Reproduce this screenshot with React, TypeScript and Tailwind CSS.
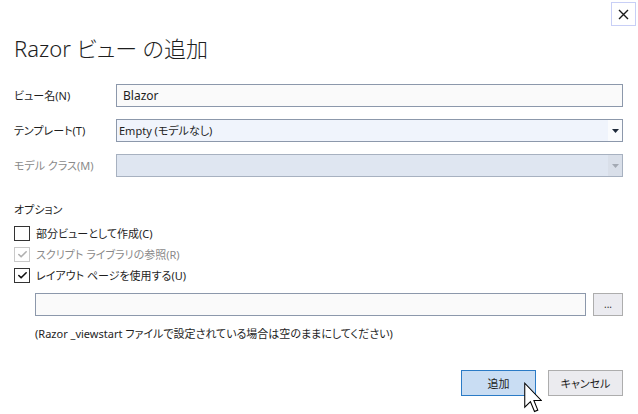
import { Check } from 'lucide-react'

const font = "font-['Noto_Sans','Noto_Sans_CJK_JP',sans-serif] [font-feature-settings:'palt']"

function Arrow({ muted }: { muted?: boolean }) {
  return (
    <div className={`w-[14px] self-stretch flex items-center justify-center ${muted ? 'bg-[#d9dfe9]' : 'bg-[#fafbfd]'}`}>
      <svg width="7" height="4" viewBox="0 0 7 4">
        <path d="M0 0h7L3.5 4z" fill={muted ? '#a3a9b3' : '#1e2a3a'} />
      </svg>
    </div>
  )
}

function CheckRow({ label, checked, disabled }: { label: string; checked?: boolean; disabled?: boolean }) {
  return (
    <div className="flex items-center h-[21px] gap-[6px]">
      <div
        className={`w-[16px] h-[15px] border flex items-center justify-center ${
          disabled ? 'border-[#c9c9c9] bg-white' : 'border-[#333] bg-white'
        }`}
      >
        {checked && <Check size={11} strokeWidth={3.5} className={disabled ? 'text-[#b0b0b0]' : 'text-[#111]'} />}
      </div>
      <span className={disabled ? 'text-[#8a8a8a]' : 'text-[#1e1e1e]'}>{label}</span>
    </div>
  )
}

export default function App() {
  return (
    <div className={`relative w-[638px] h-[414px] bg-white text-[11px] leading-none text-[#1e1e1e] pl-[14px] pr-[15px] ${font}`}>
      <div className="flex justify-end pt-[2px] -mr-[13px]">
        <button className="w-[25px] h-[24px] border border-[#c8cff6] flex items-center justify-center">
          <svg width="11" height="11" viewBox="0 0 11 11">
            <path d="M1 1l9 9M10 1l-9 9" stroke="#1a1a1a" strokeWidth="1.4" />
          </svg>
        </button>
      </div>

      <h1 className="mt-[6px] text-[22px] font-light leading-[32px] text-[#1e1e1e]">Razor ビュー の追加</h1>

      <div className="mt-[20px] grid grid-cols-[102px_1fr] gap-y-[12px] items-center">
        <span>ビュー名(N)</span>
        <div className="h-[23px] border border-[#8c98ab] bg-[#fafafa] flex items-center px-[6px] text-[12px]">Blazor</div>

        <span>テンプレート(T)</span>
        <div className="h-[23px] border border-[#8c98ab] bg-[#f0f4fc] flex items-center">
          <span className="flex-1 px-[2px]">Empty (モデルなし)</span>
          <Arrow />
        </div>

        <span className="text-[#8a8a8a]">モデル クラス(M)</span>
        <div className="h-[23px] border border-[#a7b1c0] bg-[#dfe6f1] flex">
          <span className="flex-1" />
          <Arrow muted />
        </div>
      </div>

      <div className="mt-[27px]">オプション</div>

      <div className="mt-[8px] flex flex-col">
        <CheckRow label="部分ビューとして作成(C)" />
        <CheckRow label="スクリプト ライブラリの参照(R)" checked disabled />
        <CheckRow label="レイアウト ページを使用する(U)" checked />
      </div>

      <div className="mt-[7px] ml-[21px] flex gap-[7px]">
        <div className="flex-1 h-[23px] border border-[#8c98ab] bg-[#fafafa]" />
        <button className="w-[30px] h-[23px] border border-[#adadad] bg-[#ebebf0] text-[10px] text-[#333] flex items-end justify-center pb-[6px]">
          ...
        </button>
      </div>

      <p className="mt-[12px] ml-[21px]">(Razor _viewstart ファイルで設定されている場合は空のままにしてください)</p>

      <div className="mt-[31px] flex justify-end gap-[12px]">
        <button className="w-[75px] h-[26px] border border-[#2b7bc6] bg-[#c9ddf3] flex items-center justify-center">追加</button>
        <button className="w-[75px] h-[26px] border border-[#adadad] bg-[#ebebef] flex items-center justify-center">キャンセル</button>
      </div>

      <svg className="absolute left-[524px] top-[382px]" width="18" height="31" viewBox="0 0 12 20">
        <path d="M0.5 0.5V16.5L4.3 12.8L7 19.3L9.2 18.4L6.6 12H11.5Z" fill="white" stroke="black" strokeWidth="0.7" strokeLinejoin="miter" />
      </svg>
    </div>
  )
}
